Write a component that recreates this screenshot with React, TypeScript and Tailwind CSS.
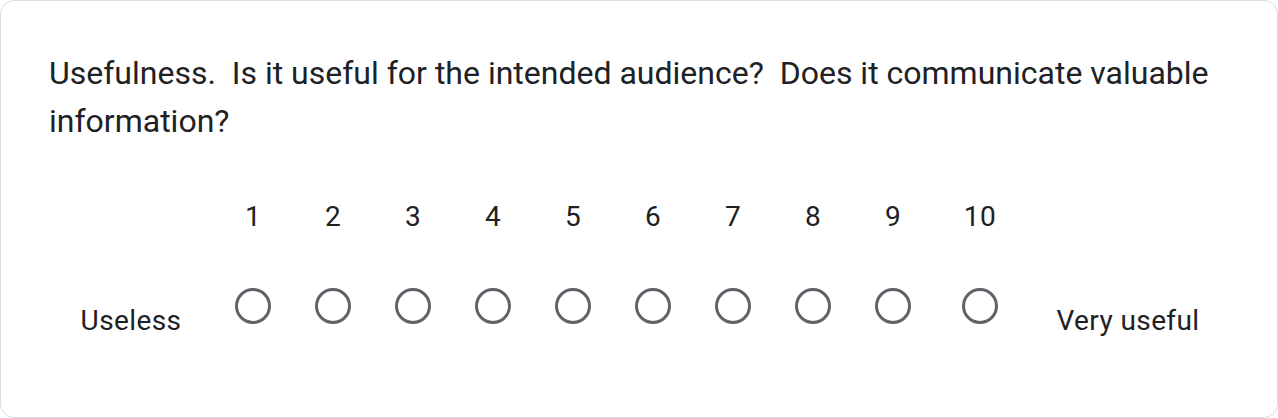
export default function App() {
  const scale = [1, 2, 3, 4, 5, 6, 7, 8, 9, 10]
  return (
    <div className="w-[1278px] h-[418px] bg-white" style={{ fontFamily: 'Roboto, "Liberation Sans", sans-serif' }}>
      <div className="h-[418px] border border-[#dadce0] rounded-[14px] bg-white pl-[48px] pr-[48px] pt-[48px] text-[#202124]">
        <div className="text-[32px] leading-[48px] whitespace-pre-wrap">
          {'Usefulness.  Is it useful for the intended audience?  Does it communicate valuable information?'}
        </div>

        {/* linear scale */}
        <div className="mt-[48px] flex items-end">
          <div className="w-[164px] text-center text-[28px] leading-[36px] tracking-[0.4px]">Useless</div>
          {scale.map((n) => (
            <div
              key={n}
              className={`flex flex-col items-center pb-[13px] ${n === 10 ? 'w-[94px]' : 'w-[80px]'}`}
            >
              <div className="h-[48px] leading-[48px] text-[28px] tracking-[0.4px]">{n}</div>
              <div className="mt-[45px] h-[40px] flex items-center justify-center">
                <span className="block w-[36px] h-[36px] rounded-full border-[3.6px] border-[#5f6368]" />
              </div>
            </div>
          ))}
          <div className="flex-1 text-center text-[28px] leading-[36px] tracking-[0.4px]">Very useful</div>
        </div>
      </div>
    </div>
  )
}
